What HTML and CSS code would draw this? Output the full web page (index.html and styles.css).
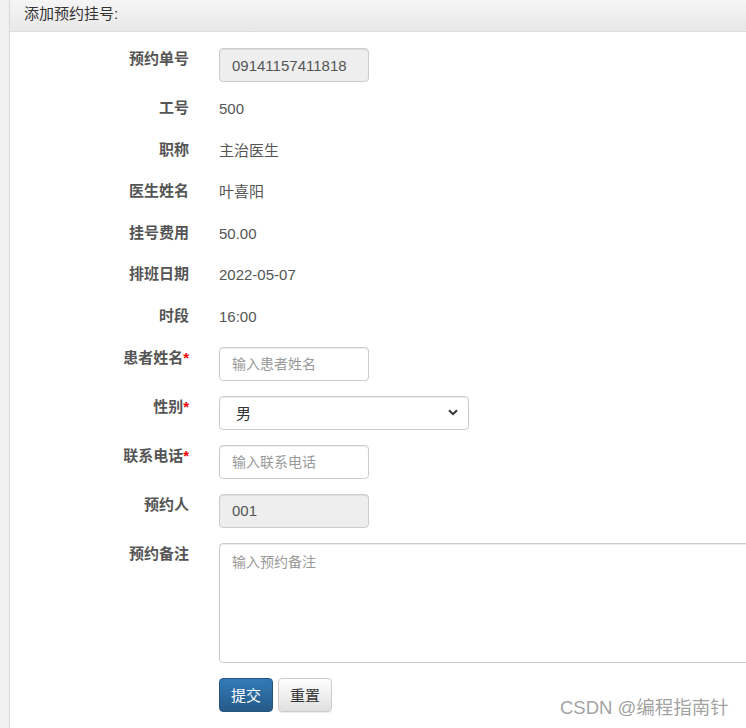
FILE: index.html
```html
<!DOCTYPE html>
<html lang="zh">
<head>
<meta charset="utf-8">
<title>添加预约挂号</title>
<link rel="stylesheet" href="styles.css">
</head>
<body>
<div class="page">
  <div class="sidebar"></div>
  <div class="main">
    <div class="panel-heading">添加预约挂号:</div>
    <form class="form">
      <div class="row input-row">
        <label class="label">预约单号</label>
        <div class="control"><input class="input short" type="text" value="09141157411818" disabled></div>
      </div>
      <div class="row static-row">
        <label class="label">工号</label>
        <div class="value">500</div>
      </div>
      <div class="row static-row">
        <label class="label">职称</label>
        <div class="value">主治医生</div>
      </div>
      <div class="row static-row">
        <label class="label">医生姓名</label>
        <div class="value">叶喜阳</div>
      </div>
      <div class="row static-row">
        <label class="label">挂号费用</label>
        <div class="value">50.00</div>
      </div>
      <div class="row static-row">
        <label class="label">排班日期</label>
        <div class="value">2022-05-07</div>
      </div>
      <div class="row static-row">
        <label class="label">时段</label>
        <div class="value">16:00</div>
      </div>
      <div class="row input-row">
        <label class="label">患者姓名<span class="req">*</span></label>
        <div class="control"><input class="input short" type="text" placeholder="输入患者姓名"></div>
      </div>
      <div class="row input-row">
        <label class="label">性别<span class="req">*</span></label>
        <div class="control">
          <div class="select">
            <span>男</span>
            <svg class="chev" width="10" height="7" viewBox="0 0 10 7"><path d="M1 1.2 L5 5.2 L9 1.2" fill="none" stroke="#333" stroke-width="2"/></svg>
          </div>
        </div>
      </div>
      <div class="row input-row">
        <label class="label">联系电话<span class="req">*</span></label>
        <div class="control"><input class="input short" type="text" placeholder="输入联系电话"></div>
      </div>
      <div class="row input-row">
        <label class="label">预约人</label>
        <div class="control"><input class="input short" type="text" value="001" disabled></div>
      </div>
      <div class="row input-row">
        <label class="label">预约备注</label>
        <div class="control"><textarea class="input area" placeholder="输入预约备注"></textarea></div>
      </div>
      <div class="row input-row">
        <div></div>
        <div class="control buttons">
          <button type="button" class="btn btn-primary">提交</button>
          <button type="button" class="btn btn-default">重置</button>
        </div>
      </div>
    </form>
  </div>
</div>
<div class="watermark">CSDN @编程指南针</div>
</body>
</html>
```
FILE: styles.css
```css
html, body {
  margin: 0;
  padding: 0;
  background: #fff;
  font-family: "Liberation Sans", "Noto Sans CJK SC", sans-serif;
  font-size: 15px;
  color: #555;
}
.page {
  display: flex;
  height: 728px;
  overflow: hidden;
}
.sidebar {
  width: 9px;
  flex: none;
  background: #f0f0f0;
  border-right: 1px solid #d8d8d8;
}
.main {
  flex: 1;
  min-width: 0;
  overflow: hidden;
}
.panel-heading {
  height: 32px;
  box-sizing: border-box;
  padding: 4px 14px 0;
  line-height: 19px;
  font-size: 15px;
  color: #333;
  background: linear-gradient(#f5f5f5, #e8e8e8);
  border-bottom: 1px solid #ddd;
}
.form {
  padding-top: 16px;
}
.row {
  display: grid;
  grid-template-columns: 179px 1fr;
  column-gap: 30px;
  margin-bottom: 15px;
}
.static-row {
  height: 26.6px;
}
.label {
  text-align: right;
  font-weight: bold;
  line-height: 20px;
  padding-top: 1px;
  color: #555;
}
.req {
  color: #e00;
}
.value {
  line-height: 21px;
  padding-top: 1px;
  color: #555;
}
.control {
  min-width: 0;
}
.input {
  box-sizing: border-box;
  height: 34px;
  padding: 6px 12px;
  border: 1px solid #ccc;
  border-radius: 4px;
  font-family: "Liberation Sans", "Noto Sans CJK SC", sans-serif;
  font-size: 15px;
  color: #555;
  background: #fff;
  box-shadow: inset 0 1px 1px rgba(0,0,0,0.075);
  display: block;
}
.input::placeholder {
  color: #999;
  font-size: 14px;
}
.input:disabled {
  background: #eee;
  color: #555;
  -webkit-text-fill-color: #555;
  opacity: 1;
}
.short {
  width: 150px;
}
.select {
  box-sizing: border-box;
  width: 250px;
  height: 34px;
  border: 1px solid #ccc;
  border-radius: 4px;
  padding: 0 10px 0 16px;
  display: flex;
  align-items: center;
  justify-content: space-between;
  color: #333;
  background: #fff;
  box-shadow: inset 0 1px 1px rgba(0,0,0,0.075);
}
.area {
  width: 560px;
  height: 120px;
  resize: none;
  padding: 8px 12px;
  line-height: 20px;
}
.buttons {
  display: flex;
  gap: 5px;
}
.btn {
  box-sizing: border-box;
  height: 34px;
  width: 54px;
  border-radius: 4px;
  font-family: "Liberation Sans", "Noto Sans CJK SC", sans-serif;
  font-size: 15px;
  padding: 0;
  cursor: pointer;
}
.btn-primary {
  color: #fff;
  background: linear-gradient(#337ab7, #265a88);
  border: 1px solid #245580;
}
.btn-default {
  color: #333;
  background: linear-gradient(#fff, #e0e0e0);
  border: 1px solid #ccc;
  box-shadow: 0 1px 1px rgba(0,0,0,0.08);
}
.watermark {
  position: absolute;
  left: 560px;
  top: 696px;
  font-size: 18.5px;
  line-height: 24px;
  color: rgba(120,120,120,0.7);
  font-family: "Liberation Sans", "Noto Sans CJK SC", sans-serif;
  white-space: nowrap;
}
```
